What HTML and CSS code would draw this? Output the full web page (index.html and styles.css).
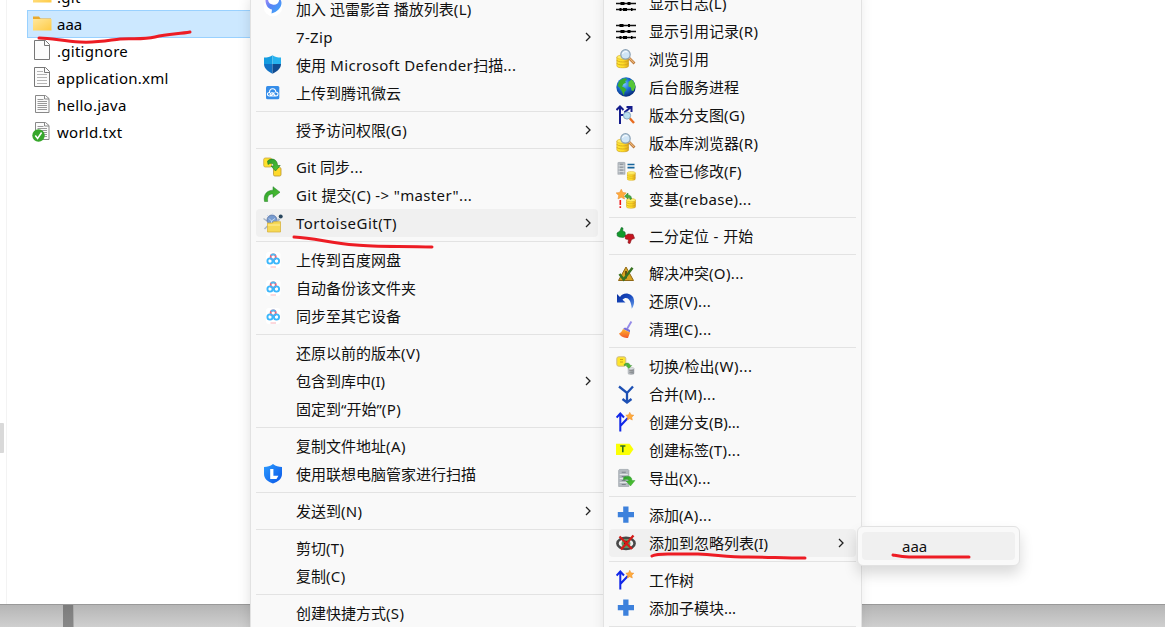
FILE: index.html
```html
<!DOCTYPE html>
<html lang="zh-CN">
<head>
<meta charset="utf-8">
<title>资源管理器</title>
<link rel="stylesheet" href="styles.css">
</head>
<body>
<svg class="defs" aria-hidden="true">
  <defs>
    <linearGradient id="gFolder" x1="0" y1="0" x2="1" y2="1"><stop offset="0" stop-color="#ffe79b"/><stop offset="1" stop-color="#ffcb45"/></linearGradient>
    <linearGradient id="gGold"><stop offset="0" stop-color="#ffe833"/><stop offset=".55" stop-color="#ffdc28"/><stop offset="1" stop-color="#dca51b"/></linearGradient>
    <linearGradient id="gGrey"><stop offset="0" stop-color="#c7cbcf"/><stop offset="1" stop-color="#8d9399"/></linearGradient>
    <linearGradient id="gGreen" x1="0" y1="0" x2="1" y2="1"><stop offset="0" stop-color="#2a9d2c"/><stop offset="1" stop-color="#55c834"/></linearGradient>
    <linearGradient id="gThunder" x1="0" y1="0" x2="1" y2="1"><stop offset="0" stop-color="#a78cf8"/><stop offset=".4" stop-color="#5b83f5"/><stop offset="1" stop-color="#37adfa"/></linearGradient>
    <linearGradient id="gLenovo" x1="0" y1="0" x2="1" y2="1"><stop offset="0" stop-color="#2d9cff"/><stop offset="1" stop-color="#0a55e6"/></linearGradient>
    <linearGradient id="gBroom" x1="0" y1="0" x2="0" y2="1"><stop offset="0" stop-color="#ffb52c"/><stop offset="1" stop-color="#f2572b"/></linearGradient>
    <linearGradient id="gUndo" x1="0" y1="0" x2="1" y2="1"><stop offset="0" stop-color="#0a2f9e"/><stop offset=".5" stop-color="#1a4cc0"/><stop offset="1" stop-color="#6ea4ee"/></linearGradient>
    <radialGradient id="gGlobe" cx=".4" cy=".35" r=".7"><stop offset="0" stop-color="#7cc7ff"/><stop offset=".45" stop-color="#1c70d8"/><stop offset="1" stop-color="#04246f"/></radialGradient>
  </defs>
  <symbol id="i-db" viewBox="0 0 12 13"><path d="M.5 2.5v8C.5 13.2 11.500 13.200 11.500 10.500v-8z" fill="url(#gGold)" stroke="#c99c22" stroke-width=".6"/><path d="M.5 5.200C1 7.500 11 7.500 11.500 5.200M.5 8C1 10.300 11 10.300 11.500 8" fill="none" stroke="#d3a41c" stroke-width=".8"/><ellipse cx="6" cy="2.500" rx="5.500" ry="2" fill="#ffef6a" stroke="#d9ae25" stroke-width=".6"/></symbol>
  <symbol id="i-dbgrey" viewBox="0 0 12 13"><path d="M.5 2.500v8C.5 13.200 11.500 13.200 11.500 10.500v-8z" fill="url(#gGrey)" stroke="#8e9296" stroke-width=".6"/><path d="M3 6h6M3 9h6" stroke="#777" /><ellipse cx="6" cy="2.500" rx="5.500" ry="2" fill="#dcdfe1" stroke="#999" stroke-width=".6"/></symbol>
  <symbol id="i-star" viewBox="0 0 10 10"><path d="M5 .2 6.500 3.300 9.900 3.700 7.400 6.100 8.100 9.600 5 7.900 1.900 9.600 2.600 6.100.1 3.700 3.500 3.300z" fill="#ffab3d" stroke="#e88b2a" stroke-width=".5"/></symbol>
  <symbol id="i-cab" viewBox="0 0 12 18"><path d="M1 1.500 2 .4h8l1 1.100V17.500H1z" fill="#b4bac0" stroke="#9da3a9" stroke-width=".7"/><path d="M2 5.500h8M2 9.500h8M2 13.500h8" stroke="#e3e6e8"/><path d="M4 3.500h4M4 7.500h4M4 11.500h4M4 15.500h4" stroke="#7b8289"/></symbol>
  <symbol id="i-log" viewBox="0 0 20 20"><path d="M0 4.500h20M0 10.500h20M0 16.500h20" stroke="#111" stroke-width="1.300"/><path d="M3.500 4.500h4M12 4.500h2M4.500 10.500h4M11.500 10.500h3M3.500 16.500h2M7 16.500h4M15 16.500h1.500" stroke="#000" stroke-width="3"/></symbol>
  <symbol id="i-browse" viewBox="0 0 20 20"><use href="#i-db" x=".2" y="5.500" width="13" height="14"/><path d="m13 9 5.500 5.500" stroke="#b67537" stroke-width="2.600"/><path d="m13 8.800 5 5" stroke="#f0b878" stroke-width="1.200"/><circle cx="9.500" cy="5.400" r="4.700" fill="#cfe5f6" stroke="#8ba2b5" stroke-width="1.200"/><path d="M6.500 5c.5-2 3-3 5-2" stroke="#fff" fill="none"/></symbol>
  <symbol id="i-globe" viewBox="0 0 20 20"><circle cx="10" cy="10" r="9.700" fill="url(#gGlobe)"/><path d="M3 4.500C5 2 8 1 10 1.200L11 3 9 4l1 1.500L7.500 7 6 9.500 9 11l1.500 2-2 2-.5 3.500C6.500 17 6.500 14.500 5 13L3 10 1.500 9z" fill="#39ad2e"/><path d="m12.500 5 3-2.500C18 4 19.300 7 19.300 10L17.500 14 15.500 13.500 15 10.500 12.500 9.500z" fill="#56c637"/></symbol>
  <symbol id="i-graph" viewBox="0 0 20 20"><path d="M4 19V1.500M.5 5 4 1.500 7.500 5M4 10h5V7l6-5M10.500 2H15.500V7" fill="none" stroke="#141c8c" stroke-width="2"/><path d="m13.500 13 4.500 5" stroke="#e86c20" stroke-width="2.400"/><circle cx="11" cy="10.500" r="3.600" fill="#b9dfef" stroke="#86a8c0"/></symbol>
  <symbol id="i-check" viewBox="0 0 20 20"><use href="#i-cab" x=".7" y=".8" width="9.500" height="13"/><path d="M11.500 3.500h7M11.500 6.700h7" stroke="#17649b" stroke-width="1.700"/><use href="#i-db" x="10.800" y="10" width="9" height="9.800"/></symbol>
  <symbol id="i-rebase" viewBox="0 0 20 20"><use href="#i-star" width="10.500" height="10.500"/><path d="M4.300 11v5M4.300 17.300v1.800" stroke="#f11717" stroke-width="1.600"/><use href="#i-db" x="10" y="9" width="10" height="10.800"/><path d="M15.500 10C15.500 6.500 13.500 6 12 6.200V4L8.500 7.300 12 10V8.500c1.500 0 2 .5 2 2z" fill="#48a93b" stroke="#27752a" stroke-width=".5"/></symbol>
  <symbol id="i-bisect" viewBox="0 0 20 20"><path d="M1 7 4 5 5.300 1.500 7 2 6.700 5 9 6l.5 4-2.200 1.500-4-.5-2-1z" fill="#129a2c" stroke="#17662a" stroke-width=".6"/><path d="m9 10 3-2 5 .3 1.500 4-3 1.200L14 17.500l-2-.6.500-3.400L9.500 13z" fill="#c51520" stroke="#801118" stroke-width=".6"/></symbol>
  <symbol id="i-resolve" viewBox="0 0 20 20"><path d="M10 4 17.500 17.500H2.500z" fill="#d9a520" stroke="#8f6816"/><path d="M10 8v4.500M10 14v1.500" stroke="#51400d" stroke-width="1.700"/><path d="m3.500 11 4.200 5.500L16.500 4.800" fill="none" stroke="#397322" stroke-width="2.500"/></symbol>
  <symbol id="i-revert" viewBox="0 0 20 20"><path d="M1 3v8.500h8.500L6.500 8.700C10 5 15 6.700 15.800 17.700 20 12 18.500 3.500 12 2.700 8 2.200 5.500 3.800 4 6z" fill="url(#gUndo)"/></symbol>
  <symbol id="i-clean" viewBox="0 0 20 20"><path d="M15.400 2.500 11 10" stroke="#958be8" stroke-width="1.900"/><path d="m7 10 2-1.500 5 2.500v2.500z" fill="#796fd8"/><path d="M7 10C6 12 5 13.500 3 14.500 5 18 8.500 19 12 19l2-5.500z" fill="url(#gBroom)"/></symbol>
  <symbol id="i-switch" viewBox="0 0 20 20"><rect x=".8" y=".8" width="9" height="9.400" rx="1.800" fill="#ffe52a" stroke="#cbb98b"/><path d="M4 3.500h3M4 6h3" stroke="#c9a51c"/><use href="#i-dbgrey" x="11.500" y="10.500" width="7" height="8.800"/><path d="M8 8.500C11 6 14 7 14 9.500h1.800l-3 3-3-3h1.700C11 8.500 9.500 8.500 8.500 10z" fill="#4bb63a" stroke="#3b832e" stroke-width=".4"/></symbol>
  <symbol id="i-merge" viewBox="0 0 20 20"><path d="m3 2.500 8 6.500 6-6.500M11 9v9M6.500 15l4.500 3.500 4.500-3.500" fill="none" stroke="#1d50b4" stroke-width="2.300"/></symbol>
  <symbol id="i-branch" viewBox="0 0 20 20"><path d="M4.300 19.500V1.500M.6 5.500 4.300 1.500 8 5.500M4.300 14l7.500-8" fill="none" stroke="#1026e8" stroke-width="2"/><use href="#i-star" x="9.500" y="0" width="8.500" height="8.500"/></symbol>
  <symbol id="i-tag" viewBox="0 0 20 20"><path d="M0 3.700h13.500L17.500 9.300 13.500 15H0z" fill="#fbff05"/><path d="M4.200 6h5.200M6.800 6v6.300" stroke="#31701f" stroke-width="1.600"/></symbol>
  <symbol id="i-export" viewBox="0 0 20 20"><use href="#i-cab" x="1.500" y=".8" width="12.500" height="18.300"/><path d="M7.500 9.500C11 7.500 16 7.500 16 12.500h3L14.500 18 10 13h3c-.5-2-3-2-5.500-1z" fill="url(#gGreen)" stroke="#2b9d29" stroke-width=".4"/></symbol>
  <symbol id="i-add" viewBox="0 0 20 20"><path d="M7.200 1.500h5.300v5.600H18v5.200h-5.500v5.500H7.200v-5.500H1.800V7.100h5.400z" fill="#3d81dc"/></symbol>
  <symbol id="i-ignore" viewBox="0 0 20 20"><ellipse cx="10" cy="10.400" rx="8.600" ry="5.500" fill="#eee" stroke="#484848" stroke-width="2.600"/><circle cx="10" cy="10.500" r="4.500" fill="#5a9864"/><circle cx="10" cy="10" r="2.200" fill="#222"/><path d="m3.500 3.500 12.500 12.500M17.500 2.500 5 16.500" stroke="#d51c18" stroke-width="2.300"/></symbol>
  <symbol id="i-thunder" viewBox="0 0 20 20" overflow="visible"><circle cx="10" cy="8" r="9.300" fill="#fff"/><path d="M2.500 1C2.500 6.500 5.500 10 9 10.500L8.500 14.500C14 13 18.500 9 18.500 4 18.500 2 17.500 0 16-1 17 4 13 6.500 9.500 5.500 7 5 5 3.500 5 0z" fill="url(#gThunder)"/></symbol>
  <symbol id="i-defender" viewBox="0 0 20 20"><path d="M9.500.2C7.500 2 4.500 2.500 1 2.500V9h8.500z" fill="#149ce0"/><path d="M9.500.2C11.500 2 14.500 2.500 18 2.500V9H9.500z" fill="#27b2ee"/><path d="M1 9h8.500v9.800C4.500 16 1 13.500 1 9z" fill="#1272c5"/><path d="M18 9H9.500v9.800C14.500 16 18 13.500 18 9z" fill="#104c91"/></symbol>
  <symbol id="i-weiyun" viewBox="0 0 20 20"><rect x="3" y="3" width="13.300" height="13.200" rx="1.500" fill="#358de9"/><path d="M6.500 13C3.500 13 4 9 6.500 9.500 6.500 4.500 12.500 4.500 12.800 9 16 9 15.500 13 13 13H7.500l4-3.500M7.500 13C6 10 9.500 8.500 10.500 11l2 2" fill="none" stroke="#fff" stroke-width="1.100"/></symbol>
  <symbol id="i-sync" viewBox="0 0 20 20"><rect x=".7" y="1" width="8" height="9" rx="1.600" fill="#ffe12b" stroke="#c9a747" stroke-width=".8"/><rect x="10.500" y="10.500" width="7.500" height="8.500" rx="1.400" fill="#ffd92a" stroke="#b8952f" stroke-width=".8"/><path d="M4.500 4C9 0 14.500 2.500 14.500 8.500h2.700L12.500 14 8 9h2.700C10.500 6 8 5.500 5 7.500z" fill="url(#gGreen)" stroke="#257625" stroke-width=".6"/></symbol>
  <symbol id="i-commit" viewBox="0 0 20 20"><path d="M1.500 16.500C0 9 4.500 5.200 10 5.200V1.700L17 7.200 10 12.500V9C6 9 4 11 4.700 16.500z" fill="url(#gGreen)" stroke="#227c28" stroke-width=".5"/></symbol>
  <symbol id="i-tortoise" viewBox="0 0 20 20"><path d="M.5 5.500 4 8M1.500 16l3-3" stroke="#a9b6c6" stroke-width="1.500"/><circle cx="9" cy="7" r="5" fill="#779bd0" stroke="#546f9f" stroke-width=".7"/><path d="M6 5.500 8.500 8 12 5.500M8.500 8v3M4 2.500h1M9 1h1" fill="none" stroke="#c7d9ef"/><path d="M13.500 8c1.500 0 2-1 3-2" fill="none" stroke="#a3b4c8" stroke-width="2"/><circle cx="17.700" cy="3.500" r="2" fill="#28465d"/><path d="M4.500 10h5l1-1.300h7V19h-13z" fill="#f6d956" stroke="#d4ad34" stroke-width=".7"/><path d="M5 12h12" stroke="#ffef9e"/></symbol>
  <symbol id="i-baidu" viewBox="0 0 20 20"><rect x="3" y="2" width="14.500" height="16" rx="3" fill="#fff"/><circle cx="10.200" cy="7" r="2.600" fill="none" stroke="#f16175" stroke-width="1.800"/><circle cx="7" cy="11" r="2.600" fill="none" stroke="#3cb7fb" stroke-width="1.900"/><circle cx="13.500" cy="11" r="2.600" fill="none" stroke="#3cb7fb" stroke-width="1.900"/><path d="M8 5.500c1-1.500 3.500-1.500 4.500 0" fill="none" stroke="#4dbdf6" stroke-width="1.600"/><path d="M7.500 17h5.500" stroke="#f6a0aa" stroke-width=".8"/></symbol>
  <symbol id="i-lenovo" viewBox="0 0 20 20"><path d="M10 0C7 2.300 4.500 2.700 1 3v7c0 5 4 7.500 9 9.500 5-2 9-4.500 9-9.500V3C15.500 2.700 13 2.300 10 0z" fill="url(#gLenovo)"/><path d="M7.200 5h3.200v6.800h5L13.500 15H7.200z" fill="#fff"/></symbol>
  <symbol id="i-folder" viewBox="0 0 20 20"><path d="M1 3.500h6l1.500 2H19V17H1z" fill="#eaa92b"/><path d="M1 6h18.500v11.500H1z" fill="url(#gFolder)"/></symbol>
  <symbol id="i-file" viewBox="0 0 20 20"><path d="M2.500.5h11l4 4v15h-15z" fill="#fcfcfc" stroke="#777"/><path d="M12.500.5v5h5" fill="none" stroke="#777"/></symbol>
  <symbol id="i-doc" viewBox="0 0 20 20"><use href="#i-file" width="20" height="20"/><path d="M5 4.500h6M5 7.500h10M5 10.500h10M5 13.500h10M5 16.500h10" stroke="#b5b5b5"/></symbol>
  <symbol id="i-text" viewBox="0 0 20 20"><path d="M3.500 1.500h10l3.500 3v14H3.500z" fill="#fbfbfb" stroke="#888"/><path d="M12.500 1.500V5H17" fill="none" stroke="#888"/><path d="M5.500 5.500h6M5.500 7.500h9.500M5.500 9.500h9.500M5.500 11.500h9.500M5.500 13.500h9.500M5.500 15.500h9.500" stroke="#999"/></symbol>
  <symbol id="i-ok" viewBox="0 0 13 13"><circle cx="6.500" cy="6.500" r="6.200" fill="#36a72b"/><path d="m3.300 6.500 2.300 3 4-6" fill="none" stroke="#fff" stroke-width="1.500"/></symbol>
  <symbol id="i-arrow" viewBox="0 0 8 10"><path d="m2 1 4 4-4 4" fill="none" stroke="#222" stroke-width="1.300"/></symbol>
</svg>

<div class="screen">
  <main class="window">
    <div class="nav-pane"><div class="scroll-thumb"></div></div>
    <div class="files">
      <div class="file partial"><svg class="icon"><use href="#i-folder"/></svg><span>.git</span></div>
      <div class="file selected"><svg class="icon"><use href="#i-folder"/></svg><span>aaa</span></div>
      <div class="file"><svg class="icon"><use href="#i-file"/></svg><span>.gitignore</span></div>
      <div class="file"><svg class="icon"><use href="#i-doc"/></svg><span>application.xml</span></div>
      <div class="file"><svg class="icon"><use href="#i-text"/></svg><span>hello.java</span></div>
      <div class="file"><svg class="icon"><use href="#i-text"/></svg><svg class="badge"><use href="#i-ok"/></svg><span>world.txt</span></div>
    </div>
  </main>
  <footer class="desktop"><div class="gap"></div></footer>

  <div class="menu menu-main">
    <div class="item"><svg class="icon"><use href="#i-thunder"/></svg><span>加入 迅雷影音 播放列表<span class="en">(L)</span></span></div>
    <div class="item"><i class="icon"></i><span class="en">7-Zip</span><svg class="arrow"><use href="#i-arrow"/></svg></div>
    <div class="item"><svg class="icon"><use href="#i-defender"/></svg><span>使用<span class="en"> Microsoft Defender</span>扫描<span class="en">...</span></span></div>
    <div class="item"><svg class="icon"><use href="#i-weiyun"/></svg><span>上传到腾讯微云</span></div>
    <hr>
    <div class="item"><i class="icon"></i><span>授予访问权限<span class="en">(G)</span></span><svg class="arrow"><use href="#i-arrow"/></svg></div>
    <hr>
    <div class="item"><svg class="icon"><use href="#i-sync"/></svg><span>Git 同步<span class="en">...</span></span></div>
    <div class="item"><svg class="icon"><use href="#i-commit"/></svg><span><span class="en">Git </span>提交<span class="en">(C) -&gt; "master"...</span></span></div>
    <div class="item active"><svg class="icon"><use href="#i-tortoise"/></svg><span class="en wide">TortoiseGit(T)</span><svg class="arrow"><use href="#i-arrow"/></svg></div>
    <hr>
    <div class="item"><svg class="icon"><use href="#i-baidu"/></svg><span>上传到百度网盘</span></div>
    <div class="item"><svg class="icon"><use href="#i-baidu"/></svg><span>自动备份该文件夹</span></div>
    <div class="item"><svg class="icon"><use href="#i-baidu"/></svg><span>同步至其它设备</span></div>
    <hr>
    <div class="item"><i class="icon"></i><span>还原以前的版本<span class="en wide">(V)</span></span></div>
    <div class="item"><i class="icon"></i><span>包含到库中(I)</span><svg class="arrow"><use href="#i-arrow"/></svg></div>
    <div class="item"><i class="icon"></i><span>固定到“开始”<span class="en wide">(P)</span></span></div>
    <hr>
    <div class="item"><i class="icon"></i><span>复制文件地址<span class="en wide">(A)</span></span></div>
    <div class="item"><svg class="icon"><use href="#i-lenovo"/></svg><span>使用联想电脑管家进行扫描</span></div>
    <hr>
    <div class="item"><i class="icon"></i><span>发送到<span class="en">(N)</span></span><svg class="arrow"><use href="#i-arrow"/></svg></div>
    <hr>
    <div class="item"><i class="icon"></i><span>剪切<span class="en">(T)</span></span></div>
    <div class="item"><i class="icon"></i><span>复制<span class="en">(C)</span></span></div>
    <hr>
    <div class="item"><i class="icon"></i><span>创建快捷方式<span class="en">(S)</span></span></div>
  </div>

  <div class="menu menu-git">
    <div class="item"><svg class="icon"><use href="#i-log"/></svg><span>显示日志<span class="en">(L)</span></span></div>
    <div class="item"><svg class="icon"><use href="#i-log"/></svg><span>显示引用记录<span class="en">(R)</span></span></div>
    <div class="item"><svg class="icon"><use href="#i-browse"/></svg><span>浏览引用</span></div>
    <div class="item"><svg class="icon"><use href="#i-globe"/></svg><span>后台服务进程</span></div>
    <div class="item"><svg class="icon"><use href="#i-graph"/></svg><span>版本分支图<span class="en">(G)</span></span></div>
    <div class="item"><svg class="icon"><use href="#i-browse"/></svg><span>版本库浏览器<span class="en">(R)</span></span></div>
    <div class="item"><svg class="icon"><use href="#i-check"/></svg><span>检查已修改<span class="en">(F)</span></span></div>
    <div class="item"><svg class="icon"><use href="#i-rebase"/></svg><span>变基<span class="en">(rebase)...</span></span></div>
    <hr>
    <div class="item"><svg class="icon"><use href="#i-bisect"/></svg><span>二分定位<span class="en wide"> - </span>开始</span></div>
    <hr>
    <div class="item"><svg class="icon"><use href="#i-resolve"/></svg><span>解决冲突<span class="en">(O)...</span></span></div>
    <div class="item"><svg class="icon"><use href="#i-revert"/></svg><span>还原<span class="en">(V)...</span></span></div>
    <div class="item"><svg class="icon"><use href="#i-clean"/></svg><span>清理<span class="en">(C)...</span></span></div>
    <hr>
    <div class="item"><svg class="icon"><use href="#i-switch"/></svg><span>切换/检出<span class="en wide">(W)...</span></span></div>
    <div class="item"><svg class="icon"><use href="#i-merge"/></svg><span>合并<span class="en">(M)...</span></span></div>
    <div class="item"><svg class="icon"><use href="#i-branch"/></svg><span>创建分支(B)...</span></div>
    <div class="item"><svg class="icon"><use href="#i-tag"/></svg><span>创建标签<span class="en">(T)...</span></span></div>
    <div class="item"><svg class="icon"><use href="#i-export"/></svg><span>导出<span class="en">(X)...</span></span></div>
    <hr>
    <div class="item"><svg class="icon"><use href="#i-add"/></svg><span>添加<span class="en">(A)...</span></span></div>
    <div class="item active"><svg class="icon"><use href="#i-ignore"/></svg><span>添加到忽略列表(I)</span><svg class="arrow"><use href="#i-arrow"/></svg></div>
    <hr>
    <div class="item"><svg class="icon"><use href="#i-branch"/></svg><span>工作树</span></div>
    <div class="item"><svg class="icon"><use href="#i-add"/></svg><span>添加子模块...</span></div>
    <hr>
  </div>

  <div class="menu menu-ignore"><div class="item active"><span>aaa</span></div></div>

  <svg class="marks" viewBox="0 0 1165 627">
    <path d="M39 38C52 38 62 41 80 42S110 40 120 39s22 1 35-2 24-3 35-5"/>
    <path d="M294 237c22 1 35 6 62 8 20 2 45 1 76 2"/>
    <path d="M652 556c4-2 9-2 16-2h30c20 1 30 3 50 3s35 1 57 1"/>
    <path d="M893 555c5 1 9 2 16 2h60"/>
  </svg>
</div>
</body>
</html>
```
FILE: styles.css
```css
body {
  margin: 0;
  overflow: hidden;
  font: 15px/20px "Noto Sans", "Noto Sans CJK SC", sans-serif;
  color: #111;
  background: #fff;
}
.defs { position: absolute; width: 0; height: 0; }
.screen {
  position: relative;
  display: flex;
  flex-direction: column;
  width: 1165px;
  height: 627px;
  overflow: hidden;
}
.window { display: flex; height: 604px; background: #fff; }
.nav-pane { box-sizing: border-box; width: 7px; padding-top: 423px; border-right: 1px solid #f3f3f3; }
.scroll-thumb { width: 4px; height: 30px; background: #d9d9d9; border-radius: 0 1px 1px 0; }
.files { width: 260px; margin: -17px 0 0 20px; }
.file {
  position: relative;
  display: flex;
  align-items: center;
  box-sizing: border-box;
  height: 27px;
  padding: 0 0 1px 5px;
  gap: 5px;
  color: #000;
  letter-spacing: .27px;
}
.file .icon { margin-top: -3px; }
.file.partial { padding: 0 0 0 5px; }
.file.selected { letter-spacing: 0; }
.selected { background: #cce8ff; box-shadow: inset 0 0 0 1px #99d1ff; height: 28px; }
.selected .icon { margin-top: -2px; }
.badge { position: absolute; left: 5px; top: 10px; width: 13px; height: 13px; }
.icon { flex: none; width: 20px; height: 20px; }
.en { letter-spacing: .35px; }
.en.wide { letter-spacing: .5px; }
.desktop {
  box-sizing: border-box;
  height: 23px;
  padding-left: 63px;
  border-top: 1px solid #999;
  background: linear-gradient(#b5b5b5, #cfcfcf);
}
.gap { width: 10px; height: 22px; background: linear-gradient(#7c7c7c, #888); border-right: 1px solid #aaa; }
.menu { position: absolute; box-sizing: border-box; background: #f9f9f9; border: 1px solid #e2e2e2; }
.menu-main { left: 250px; top: -6px; width: 360px; height: 650px; box-shadow: 0 4px 12px rgba(0, 0, 0, .13); padding: 0 5px; }
.menu-git { left: 603px; top: -12px; width: 259px; height: 660px; box-shadow: 0 4px 12px rgba(0, 0, 0, .08); padding: 0 5px; }
.menu-ignore { left: 857px; top: 526px; width: 163px; height: 40px; border-radius: 6px; box-shadow: 0 8px 14px rgba(0, 0, 0, .15); padding: 5px 4px; }
.item {
  display: flex;
  align-items: center;
  box-sizing: border-box;
  height: 28px;
  padding: 0 12px 0 7px;
  gap: 13px;
  border-radius: 4px;
  white-space: nowrap;
}
.menu-main .item { margin-right: 6px; padding-right: 7px; }
.active { background: #f0f0f0; }
.menu-ignore .item { padding: 0 0 1px 40px; }
.arrow { flex: none; width: 8px; height: 10px; margin: -1px -1px 0 auto; }
.menu hr { height: 1px; margin: 4px 0; border: 0; background: #e3e3e3; }
.marks { position: absolute; inset: 0; width: 1165px; height: 627px; fill: none; stroke: #ed1c24; stroke-width: 3; stroke-linecap: round; }
```
